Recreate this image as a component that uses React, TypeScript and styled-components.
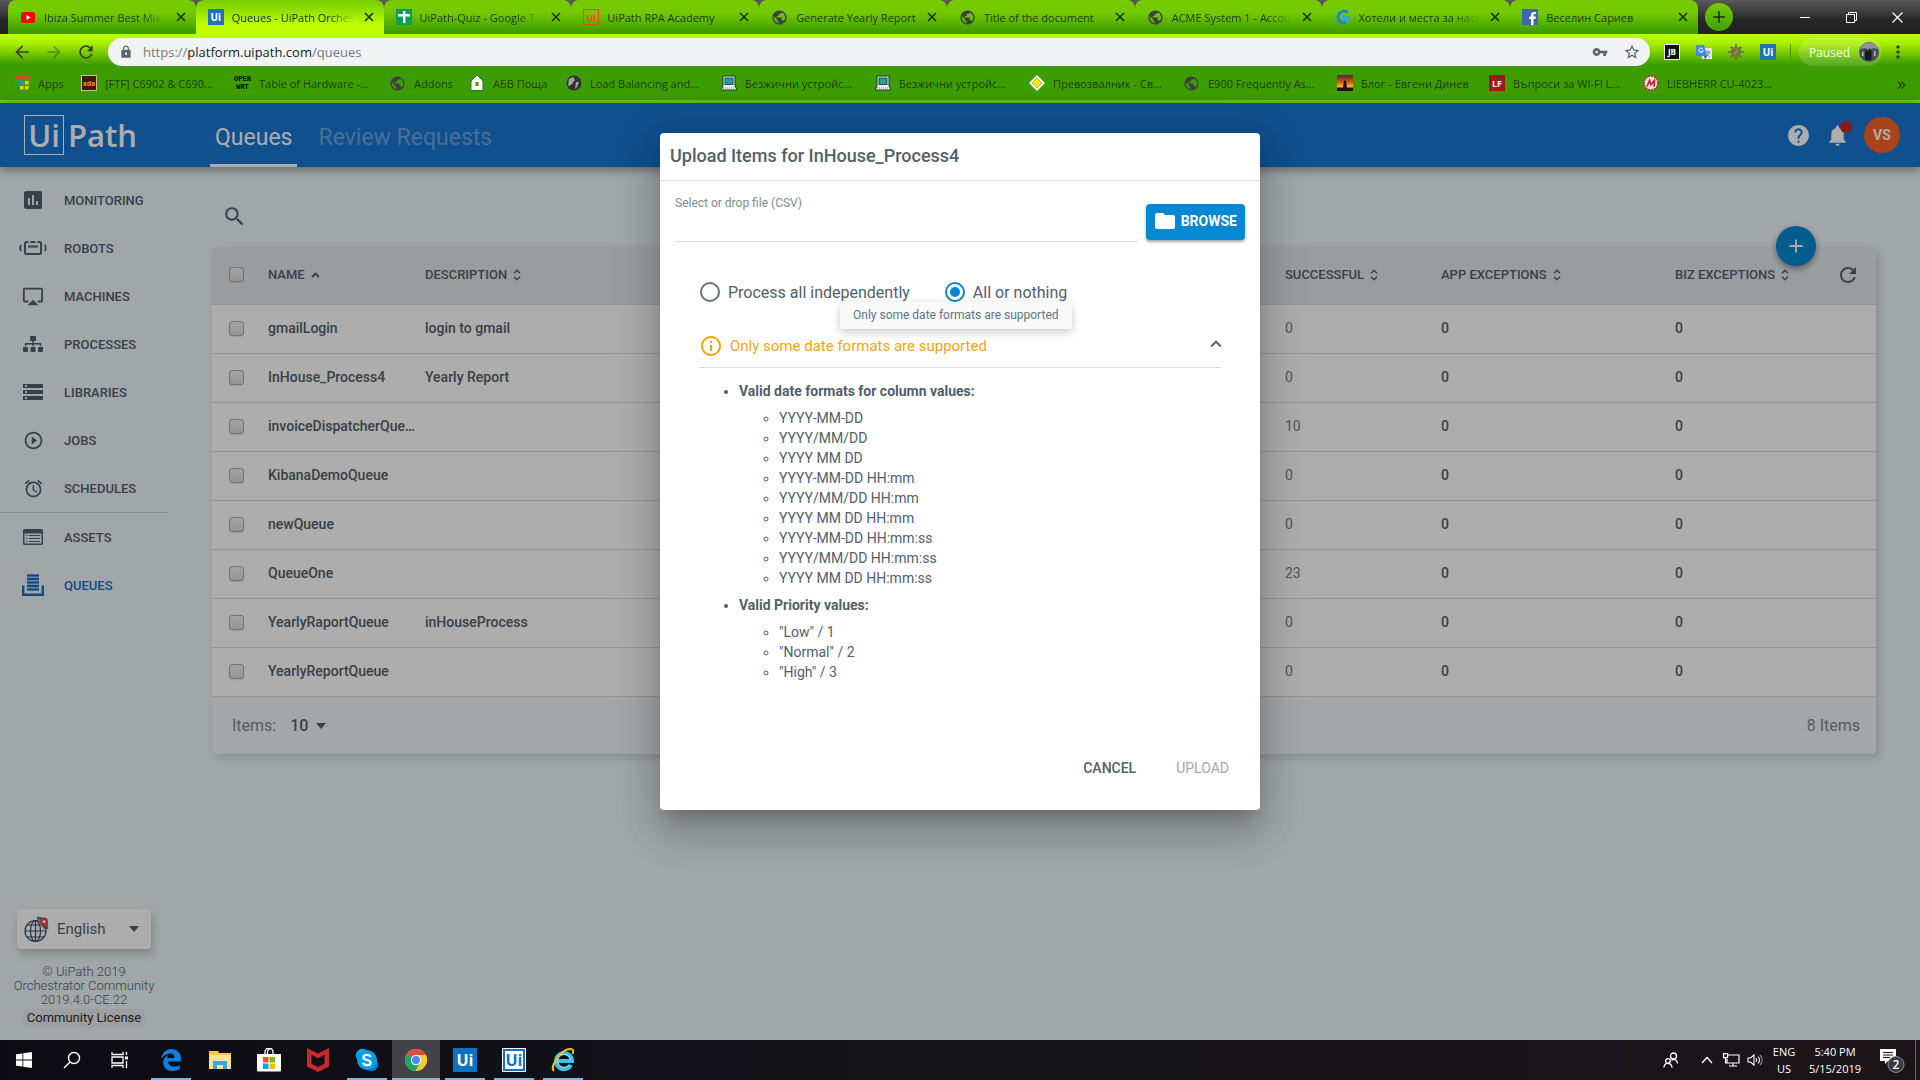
import React from "react";
import styled, { createGlobalStyle } from "styled-components";
import {
  MdAdd,
  MdAirplay,
  MdAlarm,
  MdAssessment,
  MdFolder,
  MdHelp,
  MdInfoOutline,
  MdKeyboardArrowUp,
  MdLock,
  MdMoreVert,
  MdNotifications,
  MdPlayCircleOutline,
  MdPublic,
  MdRefresh,
  MdSearch,
  MdStarBorder,
  MdStorage,
  MdVpnKey,
  MdArrowBack,
  MdArrowForward,
} from "react-icons/md";
import { FaSitemap } from "react-icons/fa";

const roboto = `Roboto, "Noto Sans", sans-serif`;
const system = `"Open Sans", "Noto Sans", sans-serif`;
const slate = "#526069";
const azure = "#0388d1";

const GlobalStyle = createGlobalStyle`
  *, *::before, *::after { box-sizing: border-box; }
  body { margin: 0; background: #eef5f9; font-family: ${roboto}; color: ${slate}; }
  button, input, select { font: inherit; color: inherit; margin: 0; }
  button { border: 0; padding: 0; background: none; cursor: pointer; }
  a { color: inherit; text-decoration: none; }
  ul { margin: 0; padding: 0; }
  svg { display: block; flex: none; }
`;

const Screen = styled.div`
  min-height: 100vh;
  display: flex;
  flex-direction: column;
`;

/* ---------- browser window ---------- */

const TabStrip = styled.div`
  height: 34px;
  display: flex;
  align-items: center;
  padding-left: 8px;
  background: linear-gradient(#5a5a5a, #262626 60%, #222);
  font-family: ${system};
  font-size: 11px;
`;

const Tabs = styled.div`
  display: flex;
  flex: 0 1 1690px;
  min-width: 0;
  height: 34px;
`;

const Tab = styled.div<{ $active?: boolean }>`
  flex: 1 1 0;
  min-width: 0;
  height: 34px;
  display: flex;
  align-items: center;
  gap: 8px;
  padding: 0 8px 0 12px;
  border-radius: 8px 8px 0 0;
  color: ${(p) => (p.$active ? "#1c2a00" : "#1f3d0c")};
  background: ${(p) =>
    p.$active
      ? "linear-gradient(#78cc00, #8fdf00 30%, #c0ff00 75%)"
      : "linear-gradient(#78cc00, #72c800 40%, #3d9c00 95%)"};
`;

const TabTitle = styled.span<{ $faded?: boolean }>`
  flex: 1;
  min-width: 0;
  overflow: hidden;
  white-space: nowrap;
  mask-image: ${(p) => (p.$faded ? "linear-gradient(90deg, #000 80%, transparent)" : "none")};
`;

const TabClose = styled.button`
  width: 14px;
  height: 14px;
  display: grid;
  place-items: center;
`;

const NewTab = styled.button`
  width: 28px;
  height: 28px;
  margin-left: 7px;
  border-radius: 50%;
  background: linear-gradient(#78cc00, #3f9e00);
  display: grid;
  place-items: center;
`;

const WindowButtons = styled.div`
  margin-left: auto;
  display: flex;
  height: 28px;
`;

const WindowButton = styled.button`
  width: 46px;
  display: grid;
  place-items: center;
`;

const Toolbar = styled.div`
  height: 32px;
  display: flex;
  align-items: center;
  padding: 4px 12px 0 12px;
  background: linear-gradient(#c0ff00, #a8ee00 30%, #3d9d00 95%);
  font-family: ${system};
`;

const ToolButton = styled.button<{ $faded?: boolean }>`
  width: 20px;
  height: 20px;
  margin-right: 12px;
  display: grid;
  place-items: center;
  color: #35442a;
  opacity: ${(p) => (p.$faded ? 0.45 : 1)};
`;

const AddressBar = styled.div`
  flex: 1;
  min-width: 0;
  height: 28px;
  display: flex;
  align-items: center;
  padding: 0 9px 0 11px;
  border-radius: 14px;
  background: #f1f3f4;
  color: #5f6368;
  gap: 10px;
`;

const Url = styled.span`
  flex: 1;
  font-size: 13px;
  color: #777b80;
  b {
    font-weight: 400;
    color: #202124;
  }
`;

const PageActions = styled.span`
  display: flex;
  align-items: center;
  gap: 15px;
`;

const Extensions = styled.div`
  display: flex;
  align-items: center;
  gap: 16px;
  margin-left: 14px;
`;

const Paused = styled.button`
  height: 28px;
  display: flex;
  align-items: center;
  gap: 9px;
  margin: 0 6px 0 8px;
  padding: 0 3px 0 10px;
  border-radius: 14px;
  background: rgba(255, 255, 255, 0.15);
  color: #f4ffe6;
  font-size: 12px;
`;

const Separator = styled.span`
  width: 1px;
  height: 16px;
  background: #4e9c10;
  margin-left: 14px;
`;

const Bookmarks = styled.nav`
  height: 37px;
  display: flex;
  align-items: center;
  padding: 0 14px 0 14px;
  border-bottom: 3px solid #78cc00;
  background: #3d9d00;
  font-family: ${system};
  font-size: 11px;
  color: #1f3d0c;
`;

const Bookmark = styled.a<{ $width: number }>`
  width: ${(p) => p.$width}px;
  display: flex;
  align-items: center;
  gap: 8px;
  white-space: nowrap;
`;

const More = styled.button`
  margin-left: auto;
  font-size: 18px;
  line-height: 18px;
`;

const Badge = styled.span<{ $bg: string; $fg: string; $line?: string; $size?: number }>`
  flex: none;
  width: 16px;
  height: 16px;
  display: grid;
  place-items: center;
  background: ${(p) => p.$bg};
  color: ${(p) => p.$fg};
  border: 1px solid ${(p) => p.$line || p.$bg};
  font: 700 ${(p) => p.$size || 10}px/1 ${system};
`;

/* ---------- application ---------- */

const Application = styled.div`
  flex: 1;
  position: relative;
  display: flex;
  flex-direction: column;
`;

const AppHeader = styled.header`
  position: relative;
  height: 64px;
  display: flex;
  align-items: center;
  padding: 0 20px 0 24px;
  background: #1976d2;
  color: #fff;
  box-shadow: 0 2px 10px rgba(0, 0, 0, 0.45);
`;

const Logo = styled.a`
  width: 186px;
  display: flex;
  align-items: center;
  gap: 4px;
  font: 600 31px/40px ${system};
`;

const LogoBox = styled.span`
  width: 40px;
  height: 40px;
  border: 1px solid #fff;
  line-height: 38px;
  text-align: center;
`;

const AppTabs = styled.nav`
  display: flex;
  gap: 16px;
  align-self: stretch;
`;

const AppTab = styled.a<{ $active?: boolean }>`
  padding: 9px 5px 0;
  font-size: 23px;
  font-weight: 400;
  line-height: 52px;
  color: ${(p) => (p.$active ? "#fff" : "rgba(255,255,255,.35)")};
  border-bottom: 3px solid ${(p) => (p.$active ? "#fff" : "transparent")};
`;

const HeaderActions = styled.div`
  margin-left: auto;
  display: flex;
  align-items: center;
  gap: 14px;
`;

const Bell = styled.button`
  position: relative;
  &::after {
    content: "";
    position: absolute;
    top: -2px;
    right: -2px;
    width: 12px;
    height: 12px;
    border-radius: 50%;
    background: #c62828;
  }
`;

const Avatar = styled.button`
  width: 36px;
  height: 36px;
  border-radius: 50%;
  background: #fb6325;
  color: #fff;
  font-size: 14px;
  font-weight: 700;
`;

const Body = styled.div`
  flex: 1;
  display: grid;
  grid-template-columns: 168px minmax(0, 1fr);
`;

const Sidebar = styled.aside`
  display: flex;
  flex-direction: column;
  padding: 9px 0 13px;
`;

const NavItem = styled.a<{ $active?: boolean }>`
  height: 48px;
  display: flex;
  align-items: center;
  gap: 17px;
  padding-left: 19px;
  font-size: 13px;
  font-weight: 500;
  color: ${(p) => (p.$active ? "#1b6ec9" : slate)};
`;

const IconSlot = styled.span`
  width: 28px;
  display: grid;
  place-items: center;
`;

const Divider = styled.hr`
  width: 100%;
  height: 1px;
  margin: 0;
  border: 0;
  background: #c9ced1;
`;

const Language = styled.label`
  width: 134px;
  height: 40px;
  margin: auto 17px 16px;
  display: flex;
  align-items: center;
  gap: 7px;
  padding: 0 12px 0 7px;
  border-radius: 4px;
  background: #fff;
  box-shadow: 2px 5px 10px rgba(0, 0, 0, 0.2);
  font-size: 15px;
`;

const PlainSelect = styled.select`
  appearance: none;
  flex: 1;
  min-width: 0;
  padding: 0;
  border: 0;
  background: none;
`;

const Caret = styled.span`
  border: 5px solid transparent;
  border-top: 6px solid #526069;
  border-bottom: 0;
`;

const Legal = styled.footer`
  text-align: center;
  font-size: 13px;
  font-weight: 300;
  line-height: 14px;
`;

const License = styled.button`
  height: 18px;
  margin-top: 2px;
  padding: 0 4px;
  border-radius: 4px;
  background: #e8eaed;
  color: #2b2f33;
  font-weight: 400;
  line-height: 18px;
`;

const Content = styled.main`
  padding: 37px 44px 0;
`;

const SearchButton = styled.button`
  display: block;
  margin: 0 0 18px 10px;
`;

const Panel = styled.section`
  position: relative;
  border-radius: 4px;
  background: #f1f7fb;
  box-shadow: 3px 4px 10px rgba(0, 0, 0, 0.15);
`;

const AddButton = styled.button`
  position: absolute;
  z-index: 1;
  top: -21px;
  right: 60px;
  width: 40px;
  height: 40px;
  border-radius: 50%;
  background: ${azure};
  color: #fff;
  display: grid;
  place-items: center;
  box-shadow: 0 3px 6px rgba(0, 0, 0, 0.4);
`;

const Table = styled.table`
  width: 100%;
  table-layout: fixed;
  border-collapse: separate;
  border-spacing: 0;
  th,
  td {
    padding: 0 0 2px;
    text-align: left;
    border-bottom: 1px solid #dcdcdc;
  }
  th {
    height: 58px;
    background: #e2e8ec;
    font-size: 13px;
    font-weight: 500;
  }
  td {
    height: 49px;
    background: #fff;
    font-size: 14px;
    font-weight: 500;
    overflow: hidden;
    white-space: nowrap;
    text-overflow: ellipsis;
  }
  th:first-child {
    border-top-left-radius: 4px;
  }
  th:last-child {
    border-top-right-radius: 4px;
  }
`;

const Col = styled.col<{ $width?: number }>`
  width: ${(p) => (p.$width ? p.$width + "px" : "auto")};
`;

const Clip = styled.span`
  display: block;
  max-width: 150px;
  overflow: hidden;
  text-overflow: ellipsis;
`;

const Muted = styled.span`
  font-weight: 400;
  color: #6f7e87;
`;

const SortButton = styled.button`
  display: flex;
  align-items: center;
  gap: 6px;
  font-weight: 500;
`;

const RefreshButton = styled.button`
  display: block;
  margin-left: 17px;
`;

const Check = styled.input`
  appearance: none;
  display: block;
  width: 15px;
  height: 15px;
  margin-left: 17px;
  border: 1px solid #aaa;
  border-radius: 3px;
  background: linear-gradient(#f0f0f0, #dcdcdc);
  box-shadow: 0 1px 1px rgba(0, 0, 0, 0.1);
`;

const Pager = styled.div`
  height: 57px;
  display: flex;
  align-items: center;
  padding: 0 16px 0 20px;
  font-size: 16px;
  color: #7d8b93;
`;

const PageSize = styled.label`
  display: flex;
  align-items: center;
  gap: 6px;
  select {
    width: 20px;
    margin-left: 8px;
    font-weight: 500;
    color: ${slate};
  }
`;

const Total = styled.span`
  margin-left: auto;
`;

/* ---------- dialog ---------- */

const Backdrop = styled.div`
  position: absolute;
  z-index: 2;
  inset: 0;
  display: flex;
  justify-content: center;
  align-items: flex-start;
  padding-top: 30px;
  background: rgba(0, 0, 0, 0.32);
`;

const Dialog = styled.div`
  width: 600px;
  border-radius: 4px;
  background: #fff;
  box-shadow: 0 11px 15px -7px rgba(0, 0, 0, 0.2), 0 24px 38px 3px rgba(0, 0, 0, 0.14),
    0 9px 46px 8px rgba(0, 0, 0, 0.12);
`;

const DialogTitle = styled.h2`
  height: 48px;
  margin: 0;
  padding: 0 10px;
  border-bottom: 1px solid #dcdfe1;
  font-size: 18px;
  font-weight: 500;
  line-height: 46px;
`;

const FileRow = styled.div`
  display: flex;
  gap: 8px;
  padding: 15px 15px 0;
`;

const FileField = styled.label`
  flex: 1;
  font-size: 12px;
  line-height: 14px;
  color: #7b8c95;
  input {
    display: block;
    width: 100%;
    height: 32px;
    border: 0;
    border-bottom: 1px solid #dcdfe1;
    background: none;
    outline: 0;
  }
`;

const Browse = styled.button`
  height: 36px;
  margin-top: 8px;
  padding: 0 8px 2px 7px;
  display: flex;
  align-items: center;
  gap: 4px;
  border-radius: 4px;
  background: ${azure};
  color: #fff;
  font-size: 14px;
  font-weight: 700;
  box-shadow: 0 2px 3px rgba(0, 0, 0, 0.35);
`;

const Options = styled.fieldset`
  position: relative;
  display: flex;
  gap: 35px;
  margin: 40px 0 0;
  padding: 0 40px;
  border: 0;
`;

const Option = styled.label`
  display: flex;
  align-items: center;
  gap: 8px;
  height: 20px;
  font-size: 16px;
  input {
    appearance: none;
    width: 20px;
    height: 20px;
    border: 2px solid #607580;
    border-radius: 50%;
    background: #fff;
  }
  input:checked {
    border-color: ${azure};
    background: ${azure};
    background-clip: content-box;
    padding: 3px;
  }
`;

const Tooltip = styled.div`
  position: absolute;
  z-index: 1;
  top: 20px;
  left: 180px;
  padding: 0 13px;
  border-radius: 3px;
  background: #fafafa;
  font-size: 12px;
  line-height: 27px;
  color: #607580;
  white-space: nowrap;
  box-shadow: 0 3px 10px rgba(0, 0, 0, 0.22);
`;

const Notice = styled.button`
  width: 522px;
  height: 44px;
  margin: 22px 39px 0;
  display: flex;
  align-items: center;
  gap: 7px;
  border-bottom: 1px solid #dcdfe1;
  color: #f7a411;
  font-size: 15px;
`;

const Fold = styled.span`
  margin: 0 -6px 4px auto;
  color: ${slate};
`;

const Groups = styled.ul`
  padding: 13px 0 0 79px;
  font-size: 14px;
  line-height: 20px;
  > li {
    margin-bottom: 7px;
  }
`;

const Values = styled.ul`
  margin-top: 7px;
  padding-left: 40px;
  list-style: circle;
`;

const Actions = styled.div`
  display: flex;
  justify-content: flex-end;
  gap: 40px;
  padding: 61px 31px 24px;
`;

const Action = styled.button`
  height: 36px;
  font-size: 14px;
  font-weight: 500;
  color: ${slate};
  &:disabled {
    font-weight: 400;
    color: #a6a6a6;
  }
`;

/* ---------- taskbar ---------- */

const Taskbar = styled.div`
  height: 40px;
  display: flex;
  background: linear-gradient(90deg, #0b0b11, #15151a 50%, #1b1519);
  color: #fff;
  font-family: ${system};
  font-size: 11px;
`;

const TaskGroup = styled.div<{ $gap?: number }>`
  display: flex;
  gap: ${(p) => p.$gap || 0}px;
  margin-right: 3px;
`;

const Task = styled.button<{ $running?: boolean; $active?: boolean }>`
  width: 48px;
  height: 40px;
  display: grid;
  place-items: center;
  padding-top: 2px;
  border-bottom: 2px solid transparent;
  background: ${(p) =>
    p.$active
      ? "linear-gradient(#76b9ed, #76b9ed) 50% 100% / 48px 2px no-repeat border-box, #434347"
      : p.$running
        ? "linear-gradient(#76b9ed, #76b9ed) 50% 100% / 40px 2px no-repeat border-box"
        : "none"};
`;

const Tray = styled.div`
  margin-left: auto;
  display: flex;
  align-items: center;
`;

const TrayButton = styled.button<{ $width: number }>`
  width: ${(p) => p.$width}px;
  height: 40px;
  display: grid;
  place-content: center;
  justify-items: center;
  line-height: 17px;
`;

const ShowDesktop = styled.button`
  width: 5px;
  height: 40px;
  border-left: 1px solid #6a6a6e;
`;

const UiTile = styled.span<{ $inverse?: boolean }>`
  width: 24px;
  height: 24px;
  display: grid;
  place-items: center;
  border: 1px solid ${(p) => (p.$inverse ? "#fff" : "#0b72c4")};
  box-shadow: inset 0 0 0 2px #0b72c4;
  background: ${(p) => (p.$inverse ? "#fff" : "#0b72c4")};
  color: ${(p) => (p.$inverse ? "#0b72c4" : "#fff")};
  font: 700 16px/20px ${system};
`;

/* ---------- drawings ---------- */

const GlobeMark = () => <MdPublic size={17} color="#3c4043" />;

const CloseMark = () => (
  <svg width="10" height="10" viewBox="0 0 10 10" stroke="#1f3300" strokeWidth="1.7">
    <path d="M1 1l8 8M9 1L1 9" />
  </svg>
);

const YoutubeMark = () => (
  <svg width="16" height="16" viewBox="0 0 16 16">
    <rect x="1" y="3" width="14" height="11" rx="2.5" fill="#f00" />
    <path d="M6.5 6v5L10.5 8.5z" fill="#fff" />
  </svg>
);

const SheetMark = () => (
  <svg width="16" height="16" viewBox="0 0 16 16">
    <rect width="16" height="16" rx="1" fill="#0f9d58" />
    <path d="M7 2h2.4v3H14v2.4H9.4V14H7V7.400H2V5h5z" fill="#fff" />
  </svg>
);

const GMark = () => (
  <svg width="16" height="16" viewBox="0 0 16 16" fill="none" strokeWidth="3">
    <path d="M13.500 3.500A6 6 0 1 0 8 14c3 0 5-1 5.500-5H8" stroke="#1e88d6" />
    <path d="M13 13.500V9H8" stroke="#29b6d8" />
  </svg>
);

const FacebookMark = () => (
  <svg width="16" height="16" viewBox="0 0 16 16">
    <rect width="16" height="16" fill="#4267b2" />
    <path d="M14 5V3h-2C9.800 3 9 4.200 9 6v1.500H7.200V10H9v6h2.500v-6h2l.4-2.500h-2.400V6.200c0-.8.300-1.200 1-1.200z" fill="#fff" />
  </svg>
);

const AppsMark = () => {
  const colors = ["#f33", "#f33", "#f33", "#2a9d4b", "#2b8df0", "#fc0", "#2a9d4b", "#fc0", "#fc0"];
  return (
    <svg width="16" height="16" viewBox="0 0 16 16">
      {colors.map((c, i) => (
        <rect key={i} x={1 + (i % 3) * 5} y={1 + Math.floor(i / 3) * 5} width="3.500" height="3.500" fill={c} />
      ))}
    </svg>
  );
};

const OpenWrt = styled.span`
  flex: none;
  width: 17px;
  display: grid;
  justify-items: center;
  font: 700 7px/8px "Liberation Mono", monospace;
  color: #000;
`;

const HouseMark = () => (
  <svg width="16" height="16" viewBox="0 0 16 16">
    <path d="M8 0l6 6v9.500H2V6z" fill="#fff" stroke="#1c7c1c" />
    <rect x="6.500" y="7" width="3" height="4" fill="#3d9d00" />
  </svg>
);

const BallMark = () => (
  <svg width="16" height="16" viewBox="0 0 16 16">
    <circle cx="8" cy="8" r="7.500" fill="#333" />
    <path d="M3 4l4-2 2 3-4 5-3 1zM10 7l3 0-2 5-2 2z" fill="#a5a5a5" />
  </svg>
);

const ComputerMark = () => (
  <svg width="16" height="16" viewBox="0 0 16 16">
    <path d="M2 1h12v10l2 4H0l2-4z" fill="#eee" stroke="#1b3b2b" />
    <rect x="4" y="3" width="8" height="6.500" fill="#2a9d9b" stroke="#14555a" />
    <path d="M2 13h12" stroke="#777" strokeDasharray="1 1" />
  </svg>
);

const DiamondMark = () => (
  <svg width="16" height="16" viewBox="0 0 16 16">
    <path d="M8 0l8 8-8 8-8-8z" fill="#fff" />
    <path d="M8 3l5 5-5 5-5-5z" fill="#fbe900" stroke="#777" strokeWidth=".6" />
  </svg>
);

const SunsetMark = () => (
  <svg width="16" height="16" viewBox="0 0 16 16">
    <defs>
      <linearGradient id="dusk" x2="0" y2="1">
        <stop offset="0" stopColor="#4a2a30" />
        <stop offset=".45" stopColor="#d9571a" />
        <stop offset=".7" stopColor="#fbb21f" />
      </linearGradient>
    </defs>
    <rect width="16" height="16" fill="url(#dusk)" />
    <path d="M0 12.500h6l1-7h2l1 7h6V16H0z" fill="#22100c" />
  </svg>
);

const MMark = () => (
  <svg width="16" height="16" viewBox="0 0 16 16">
    <circle cx="8" cy="8" r="7" fill="#f5dcdc" stroke="#c8202b" strokeWidth="1.500" strokeDasharray="2 1" />
    <path d="M4 11.500L6.500 5.500l1.500 4 3.500-4-.5 6" fill="none" stroke="#c8202b" strokeWidth="1.700" />
  </svg>
);

const TranslateMark = () => (
  <svg width="16" height="16" viewBox="0 0 16 16">
    <rect x="6" y="4" width="10" height="11" fill="#e6e6e6" />
    <path d="M9 8h5M11.500 7v1M13.500 8c-.5 2-2 3.500-4 4.500M10 8.500c.5 1.500 2 3 3.500 4" stroke="#777" fill="none" />
    <path d="M0 1h8l3 11H1a1 1 0 0 1-1-1z" fill="#4285f4" />
    <path d="M7 5.200A2.200 2.200 0 1 0 7.200 7H5.200" stroke="#fff" fill="none" />
    <path d="M8 12h3l-2 3.500z" fill="#3060c0" />
  </svg>
);

const BugMark = () => (
  <svg width="16" height="16" viewBox="0 0 16 16" stroke="#73783f" strokeWidth="1.800">
    <circle cx="8" cy="8" r="4.500" fill="#73783f" />
    <path d="M8 0v3M8 13v3M0 8h3M13 8h3M2.500 2.500l2 2M11.500 11.500l2 2M13.500 2.500l-2 2M2.500 13.500l2-2" />
    <path d="M9.500 5.500l-3 5" stroke="#9cb52c" strokeWidth="1" />
  </svg>
);

const PhotoMark = () => (
  <svg width="20" height="20" viewBox="0 0 20 20">
    <circle cx="10" cy="10" r="10" fill="#4b4f55" />
    <path d="M1 7a9.500 9.500 0 0 1 18 0l-5-1-4 2-4-2z" fill="#8d959b" />
    <path d="M6 18V9l1.500-2L9 10l1.500-4 2 3v9z" fill="#16181b" />
    <path d="M15 9h1.500v5H15zM3 10h1.500v4H3z" fill="#b8bcc0" />
  </svg>
);

const RobotIcon = () => (
  <svg width="28" height="20" viewBox="0 0 28 20" fill="none" stroke="currentColor" strokeWidth="2">
    <path d="M9.500 4h-2A1.500 1.500 0 0 0 6 5.500v9A1.500 1.500 0 0 0 7.500 16h13a1.500 1.500 0 0 0 1.500-1.500v-9A1.500 1.500 0 0 0 20.500 4h-2M11.500 4h5M9 8.500h10" />
    <path d="M2.500 7C.8 8 .8 12 2.500 13M25.500 7c1.700 1 1.700 5 0 6" strokeWidth="1.800" />
  </svg>
);

const AssetIcon = () => (
  <svg width="22" height="18" viewBox="0 0 22 18">
    <path
      fillRule="evenodd"
      fill="currentColor"
      d="M2.500 1h17A1.500 1.500 0 0 1 21 2.500v13a1.500 1.500 0 0 1-1.500 1.500h-17A1.500 1.500 0 0 1 1 15.500v-13A1.500 1.500 0 0 1 2.500 1zM2.500 5.500v10h17v-10z"
    />
    <path d="M4 7.500h1.500M7 7.500h11M4 10.500h1.500M7 10.500h11M4 13.500h1.500M7 13.500h11" stroke="currentColor" strokeWidth="1.200" />
  </svg>
);

const QueueIcon = () => (
  <svg width="22" height="22" viewBox="0 0 22 22" fill="none" stroke="currentColor">
    <path d="M1.200 11.500v9.200h19.600v-9.200" strokeWidth="2.400" />
    <path d="M5 1.500h12M5 5h12M5 8.500h12M5 12h12M5 15.500h12" strokeWidth="2.200" />
    <path d="M5 0h12v17H5z" fill="currentColor" fillOpacity=".35" stroke="none" />
  </svg>
);

const SortIcon = () => (
  <svg width="8" height="12" viewBox="0 0 8 12" fill="none" stroke="currentColor" strokeWidth="1.500">
    <path d="M1 4.200L4 1.200l3 3M1 7.800l3 3 3-3" />
  </svg>
);

const AscendingIcon = () => (
  <svg width="9" height="6" viewBox="0 0 9 6" fill="none" stroke="currentColor" strokeWidth="1.900">
    <path d="M1 5l3.500-3.500L8 5" />
  </svg>
);

const WorldIcon = () => (
  <svg width="26" height="28" viewBox="0 0 26 28" fill="none" stroke="#344a63" strokeWidth="1.200">
    <path d="M13 3c7 0 10 5 10 11" stroke="#2c92c4" strokeWidth="3" />
    <circle cx="11.500" cy="16" r="10.500" fill="#fff" />
    <ellipse cx="11.500" cy="16" rx="5" ry="10.500" />
    <path d="M11.500 5.500v21M1 16h21M3 10h17M3 22h17" />
    <path d="M20 14c-3-4-4-5-4-7.500a4 4 0 0 1 8 0C24 9 23 10 20 14z" fill="#e2483d" stroke="none" />
    <circle cx="20" cy="6.500" r="1.600" fill="#fff" stroke="none" />
  </svg>
);

const WindowsMark = () => (
  <svg width="16" height="16" viewBox="0 0 16 16" fill="#fff">
    <path d="M0 2.300l6.500-.9v6.200H0zM7.300 1.300L16 0v7.600H7.300zM0 8.400h6.500v6.200L0 13.700zM7.300 8.400H16V16l-8.700-1.300z" />
  </svg>
);

const LensMark = () => (
  <svg width="18" height="18" viewBox="0 0 18 18" fill="none" stroke="#fff" strokeWidth="1.400">
    <circle cx="11" cy="7" r="5.500" />
    <path d="M7 11l-6 6" />
  </svg>
);

const TaskViewMark = () => (
  <svg width="18" height="16" viewBox="0 0 18 16" fill="none" stroke="#fff" strokeWidth="1.300">
    <path d="M1 0v2.500h11V0M1 16v-2.500h11V16M1 5h11v6H1zM15.500 0v3M15.500 9v7" />
    <rect x="14" y="4.500" width="3" height="3" fill="#fff" stroke="none" />
  </svg>
);

const EdgeMark = () => (
  <svg width="22" height="22" viewBox="0 0 22 22">
    <path
      fill="#0f7ddb"
      d="M1 10C2 4 6 0 11.500 0 17 0 21 4 21 9.500V12.500H8c.2 3.500 3 5 6 5 2.200 0 4-.6 5.800-1.600v4.400C18 21.400 15.500 22 13 22 7 22 3.200 18.500 3.200 13.500c0-3.500 1.800-6 5-7.500-.8 1-1.100 2-1.200 3h7.500c0-3-1.600-4.600-4.500-4.600C6.500 4.400 3.500 6.500 1 10z"
    />
  </svg>
);

const ExplorerMark = () => (
  <svg width="22" height="18" viewBox="0 0 22 18">
    <path d="M0 0h9l1 2h12v16H0z" fill="#f6c845" />
    <path d="M0 4h22v14H0z" fill="#fde38f" />
    <path d="M4 18v-8h14v8h-4v-4H8v4z" fill="#35a8e0" />
  </svg>
);

const StoreMark = () => (
  <svg width="24" height="24" viewBox="0 0 24 24">
    <path d="M8 7V4a4 4 0 0 1 8 0v3M10.500 7V4a4 4 0 0 1 4-3.500" fill="none" stroke="#fff" strokeWidth="1.300" />
    <path d="M0 6h24v16.500a1 1 0 0 1-1 1H1a1 1 0 0 1-1-1z" fill="#fff" />
    <path d="M6 9h5.500v5.500H6z" fill="#f25022" />
    <path d="M12.500 9H18v5.500h-5.500z" fill="#7fba00" />
    <path d="M6 15.500h5.500V21H6z" fill="#00a4ef" />
    <path d="M12.500 15.500H18V21h-5.500z" fill="#ffb900" />
  </svg>
);

const ShieldMark = () => (
  <svg width="22" height="24" viewBox="0 0 22 24">
    <path d="M0 0l11 5.500L22 0v18.500L11 24 0 18.500zM4.500 6.800v9L11 19l6.500-3.200v-9L11 10.200z" fill="#c62a2e" fillRule="evenodd" />
  </svg>
);

const SkypeMark = () => (
  <svg width="24" height="24" viewBox="0 0 24 24">
    <circle cx="7.500" cy="7.500" r="6.700" fill="#0fa4ee" />
    <circle cx="16.500" cy="16.500" r="6.700" fill="#0078d4" />
    <circle cx="12" cy="12" r="10" fill="#089be8" />
    <path
      d="M15.800 8.800C15 7.200 13.500 6.800 12 6.800c-2 0-3.500 1-3.500 2.600 0 3.400 7.200 1.800 7.200 5.100 0 1.700-1.700 2.700-3.700 2.700-1.800 0-3.300-.6-4.100-2.400"
      fill="none"
      stroke="#fff"
      strokeWidth="2.300"
    />
  </svg>
);

const ChromeMark = () => (
  <svg width="22" height="22" viewBox="0 0 22 22">
    <circle cx="11" cy="11" r="11" fill="#fcc934" />
    <path d="M11 11L1.500 5.500a11 11 0 0 1 19 0z" fill="#dd4b3e" />
    <path d="M11 11L1.500 5.500A11 11 0 0 0 10.500 22l5-8.500z" fill="#1da462" />
    <path d="M11 6h10a11 11 0 0 1 .5 8L11 22l5-9z" fill="#fcc934" />
    <circle cx="11" cy="11" r="5.200" fill="#fff" />
    <circle cx="11" cy="11" r="4.200" fill="#4c8bf5" />
  </svg>
);

const ExplorerEMark = () => (
  <svg width="24" height="24" viewBox="0 0 24 24" fill="none">
    <path d="M20 17a8 8 0 1 1 1-4H7" stroke="#3cc0f2" strokeWidth="4" />
    <path d="M18 17a6.500 6.500 0 1 1 1.500-5" stroke="#a9e8fd" strokeWidth="1" />
    <path d="M3 23C-2 18 12 0 20 1c3 .5 2.500 3 1.500 5" stroke="#f4c217" strokeWidth="2" />
  </svg>
);

const PeopleMark = () => (
  <svg width="16" height="16" viewBox="0 0 16 16" fill="none" stroke="#fff" strokeWidth="1.300">
    <circle cx="10.500" cy="4" r="3" />
    <circle cx="5" cy="9" r="2.300" />
    <path d="M1 15.500c0-5.500 7.500-5.500 8 0M8.500 8.500c3-2.500 6 0 6 3" />
  </svg>
);

const ChevronMark = () => (
  <svg width="12" height="8" viewBox="0 0 12 8" fill="none" stroke="#fff" strokeWidth="1.300">
    <path d="M1 7l5-5.500L11 7" />
  </svg>
);

const NetworkMark = () => (
  <svg width="17" height="14" viewBox="0 0 17 14" fill="none" stroke="#fff" strokeWidth="1.200">
    <path d="M5 2h11v8H4V6M10 10v3M6 13h8M.6.600h4v4h-4zM2.500 5v5H4" />
  </svg>
);

const VolumeMark = () => (
  <svg width="17" height="14" viewBox="0 0 17 14" fill="none" stroke="#fff" strokeWidth="1.100">
    <path d="M1 5h2.500L7 2v10L3.500 9H1zM9 5c1 1.300 1 2.700 0 4M11 3.500c2 2.200 2 4.800 0 7" />
    <path d="M13 2c3 3 3 7 0 10" strokeOpacity=".5" />
  </svg>
);

const NoticeMark = () => (
  <svg width="26" height="26" viewBox="0 0 26 26">
    <path d="M1 2h16v12H9l-3 3v-3H1z" fill="#fff" />
    <path d="M4 5.500h10M4 8h10M4 10.500h7" stroke="#17161a" />
    <circle cx="17" cy="17.500" r="8" fill="#3a3a3d" stroke="#8b8b8e" />
    <text x="17" y="21.500" textAnchor="middle" fontFamily="Open Sans, sans-serif" fontSize="12" fontWeight="600" fill="#fff">
      2
    </text>
  </svg>
);

/* ---------- data ---------- */

const tabs = [
  { title: "Ibiza Summer Best Mix", icon: <YoutubeMark />, faded: true },
  { title: "Queues - UiPath Orches", icon: <Badge $bg="#2272b9" $fg="#fff">Ui</Badge>, active: true, faded: true },
  { title: "UiPath-Quiz - Google T", icon: <SheetMark />, faded: true },
  { title: "UiPath RPA Academy", icon: <Badge $bg="transparent" $fg="#fa4616" $line="#fa4616" $size={9}>Ui</Badge> },
  { title: "Generate Yearly Report", icon: <GlobeMark /> },
  { title: "Title of the document", icon: <GlobeMark /> },
  { title: "ACME System 1 - Accou", icon: <GlobeMark />, faded: true },
  { title: "Хотели и места за наст", icon: <GMark />, faded: true },
  { title: "Веселин Сариев", icon: <FacebookMark /> },
];

const bookmarks = [
  { title: "Apps", width: 67, icon: <AppsMark /> },
  { title: "[FTF] C6902 & C690...", width: 153, icon: <Badge $bg="#3a1a08" $fg="#ff8a1f" $line="#d8b9a0" $size={7}>xda</Badge> },
  {
    title: "Table of Hardware -...",
    width: 155,
    icon: (
      <OpenWrt>
        <span>OPEN</span>
        <span>WRT</span>
      </OpenWrt>
    ),
  },
  { title: "Addons", width: 80, icon: <GlobeMark /> },
  { title: "АБВ Поща", width: 97, icon: <HouseMark /> },
  { title: "Load Balancing and...", width: 155, icon: <BallMark /> },
  { title: "Безжични устройс...", width: 154, icon: <ComputerMark /> },
  { title: "Безжични устройс...", width: 154, icon: <ComputerMark /> },
  { title: "Превозвалник - Св...", width: 154, icon: <DiamondMark /> },
  { title: "E900 Frequently As...", width: 154, icon: <GlobeMark /> },
  { title: "Блог - Евгени Динев", width: 152, icon: <SunsetMark /> },
  { title: "Въпроси за WI-FI L...", width: 154, icon: <Badge $bg="#a3161a" $fg="#fff" $size={9}>LF</Badge> },
  { title: "LIEBHERR CU-4023...", width: 154, icon: <MMark /> },
];

const navigation = [
  { label: "MONITORING", icon: <MdAssessment size={24} /> },
  { label: "ROBOTS", icon: <RobotIcon /> },
  { label: "MACHINES", icon: <MdAirplay size={22} /> },
  { label: "PROCESSES", icon: <FaSitemap size={20} /> },
  { label: "LIBRARIES", icon: <MdStorage size={24} /> },
  { label: "JOBS", icon: <MdPlayCircleOutline size={21} /> },
  { label: "SCHEDULES", icon: <MdAlarm size={21} /> },
];

const queues = [
  { name: "gmailLogin", description: "login to gmail", successful: 0 },
  { name: "InHouse_Process4", description: "Yearly Report", successful: 0 },
  { name: "invoiceDispatcherQueue", description: "", successful: 10 },
  { name: "KibanaDemoQueue", description: "", successful: 0 },
  { name: "newQueue", description: "", successful: 0 },
  { name: "QueueOne", description: "", successful: 23 },
  { name: "YearlyRaportQueue", description: "inHouseProcess", successful: 0 },
  { name: "YearlyReportQueue", description: "", successful: 0 },
];

const dateFormats = [
  "YYYY-MM-DD",
  "YYYY/MM/DD",
  "YYYY MM DD",
  "YYYY-MM-DD HH:mm",
  "YYYY/MM/DD HH:mm",
  "YYYY MM DD HH:mm",
  "YYYY-MM-DD HH:mm:ss",
  "YYYY/MM/DD HH:mm:ss",
  "YYYY MM DD HH:mm:ss",
];

const priorities = ['"Low" / 1', '"Normal" / 2', '"High" / 3'];

/* ---------- sections ---------- */

const Browser = () => (
  <>
    <TabStrip>
      <Tabs>
        {tabs.map((tab) => (
          <Tab key={tab.title} $active={tab.active}>
            {tab.icon}
            <TabTitle $faded={tab.faded}>{tab.title}</TabTitle>
            <TabClose aria-label="Close tab">
              <CloseMark />
            </TabClose>
          </Tab>
        ))}
      </Tabs>
      <NewTab aria-label="New tab">
        <MdAdd size={20} color="#15330a" />
      </NewTab>
      <WindowButtons>
        <WindowButton aria-label="Minimize">
          <svg width="10" height="10" stroke="#fff">
            <path d="M0 5.500h10" />
          </svg>
        </WindowButton>
        <WindowButton aria-label="Restore">
          <svg width="11" height="11" fill="none" stroke="#fff">
            <path d="M.5 2.500h8v8h-8zM2.500 2.500v-2h8v8h-2" />
          </svg>
        </WindowButton>
        <WindowButton aria-label="Close">
          <svg width="11" height="11" stroke="#fff" strokeWidth="1.200">
            <path d="M.5.500l10 10M10.500.500l-10 10" />
          </svg>
        </WindowButton>
      </WindowButtons>
    </TabStrip>
    <Toolbar>
      <ToolButton aria-label="Back">
        <MdArrowBack size={20} />
      </ToolButton>
      <ToolButton aria-label="Forward" $faded>
        <MdArrowForward size={20} />
      </ToolButton>
      <ToolButton aria-label="Reload">
        <MdRefresh size={20} />
      </ToolButton>
      <AddressBar>
        <MdLock size={14} />
        <Url>
          https://<b>platform.uipath.com</b>/queues
        </Url>
        <PageActions>
          <MdVpnKey size={16} />
          <MdStarBorder size={18} />
        </PageActions>
      </AddressBar>
      <Extensions>
        <Badge $bg="#111" $fg="#fff" $line="#eee" $size={8}>JB</Badge>
        <TranslateMark />
        <BugMark />
        <Badge $bg="#2272b9" $fg="#fff">Ui</Badge>
      </Extensions>
      <Separator />
      <Paused>
        Paused
        <PhotoMark />
      </Paused>
      <MdMoreVert size={20} color="#2a4a14" />
    </Toolbar>
    <Bookmarks>
      {bookmarks.map((item, i) => (
        <Bookmark key={i} href="#" $width={item.width}>
          {item.icon}
          {item.title}
        </Bookmark>
      ))}
      <More aria-label="More bookmarks">»</More>
    </Bookmarks>
  </>
);

const Navigation = () => (
  <Sidebar>
    {navigation.map((item) => (
      <NavItem key={item.label} href="#">
        <IconSlot>{item.icon}</IconSlot>
        {item.label}
      </NavItem>
    ))}
    <Divider />
    <NavItem href="#">
      <IconSlot>
        <AssetIcon />
      </IconSlot>
      ASSETS
    </NavItem>
    <NavItem href="#" $active>
      <IconSlot>
        <QueueIcon />
      </IconSlot>
      QUEUES
    </NavItem>
    <Language>
      <WorldIcon />
      <PlainSelect aria-label="Language">
        <option>English</option>
      </PlainSelect>
      <Caret />
    </Language>
    <Legal>
      © UiPath 2019
      <br />
      Orchestrator Community
      <br />
      2019.4.0-CE.22
      <br />
      <License>Community License</License>
    </Legal>
  </Sidebar>
);

const QueueTable = () => (
  <Panel>
    <AddButton aria-label="Add queue">
      <MdAdd size={22} />
    </AddButton>
    <Table>
      <colgroup>
        <Col $width={56} />
        <Col $width={157} />
        <Col />
        <Col $width={156} />
        <Col $width={234} />
        <Col $width={144} />
        <Col $width={57} />
      </colgroup>
      <thead>
        <tr>
          <th>
            <Check type="checkbox" aria-label="Select all" />
          </th>
          <th>
            <SortButton>
              NAME <AscendingIcon />
            </SortButton>
          </th>
          {["DESCRIPTION", "SUCCESSFUL", "APP EXCEPTIONS", "BIZ EXCEPTIONS"].map((label) => (
            <th key={label}>
              <SortButton>
                {label} <SortIcon />
              </SortButton>
            </th>
          ))}
          <th>
            <RefreshButton aria-label="Refresh">
              <MdRefresh size={24} />
            </RefreshButton>
          </th>
        </tr>
      </thead>
      <tbody>
        {queues.map((queue) => (
          <tr key={queue.name}>
            <td>
              <Check type="checkbox" aria-label={queue.name} />
            </td>
            <td>
              <Clip>{queue.name}</Clip>
            </td>
            <td>{queue.description}</td>
            <td>
              <Muted>{queue.successful}</Muted>
            </td>
            <td>0</td>
            <td>0</td>
            <td />
          </tr>
        ))}
      </tbody>
    </Table>
    <Pager>
      <PageSize>
        Items:
        <PlainSelect>
          <option>10</option>
        </PlainSelect>
        <Caret />
      </PageSize>
      <Total>8 Items</Total>
    </Pager>
  </Panel>
);

const UploadDialog = () => (
  <Backdrop>
    <Dialog role="dialog" aria-labelledby="upload-title">
      <DialogTitle id="upload-title">Upload Items for InHouse_Process4</DialogTitle>
      <FileRow>
        <FileField>
          Select or drop file (CSV)
          <input type="text" />
        </FileField>
        <Browse>
          <MdFolder size={24} />
          BROWSE
        </Browse>
      </FileRow>
      <Options>
        <Option>
          <input type="radio" name="mode" />
          Process all independently
        </Option>
        <Option>
          <input type="radio" name="mode" defaultChecked />
          All or nothing
        </Option>
        <Tooltip role="tooltip">Only some date formats are supported</Tooltip>
      </Options>
      <Notice>
        <MdInfoOutline size={24} />
        Only some date formats are supported
        <Fold>
          <MdKeyboardArrowUp size={22} />
        </Fold>
      </Notice>
      <Groups>
        <li>
          <b>Valid date formats for column values:</b>
          <Values>
            {dateFormats.map((format) => (
              <li key={format}>{format}</li>
            ))}
          </Values>
        </li>
        <li>
          <b>Valid Priority values:</b>
          <Values>
            {priorities.map((priority) => (
              <li key={priority}>{priority}</li>
            ))}
          </Values>
        </li>
      </Groups>
      <Actions>
        <Action>CANCEL</Action>
        <Action disabled>UPLOAD</Action>
      </Actions>
    </Dialog>
  </Backdrop>
);

const DesktopTaskbar = () => (
  <Taskbar>
    <TaskGroup>
      <Task aria-label="Start"><WindowsMark /></Task>
      <Task aria-label="Search"><LensMark /></Task>
      <Task aria-label="Task view"><TaskViewMark /></Task>
    </TaskGroup>
    <TaskGroup $gap={1}>
      <Task aria-label="Edge" $running><EdgeMark /></Task>
      <Task aria-label="File Explorer"><ExplorerMark /></Task>
      <Task aria-label="Store"><StoreMark /></Task>
      <Task aria-label="McAfee"><ShieldMark /></Task>
      <Task aria-label="Skype" $running><SkypeMark /></Task>
      <Task aria-label="Chrome" $running $active><ChromeMark /></Task>
      <Task aria-label="UiPath Studio" $running><UiTile>Ui</UiTile></Task>
      <Task aria-label="UiPath Robot" $running><UiTile $inverse>Ui</UiTile></Task>
      <Task aria-label="Internet Explorer" $running><ExplorerEMark /></Task>
    </TaskGroup>
    <Tray>
      <TrayButton $width={48} aria-label="People"><PeopleMark /></TrayButton>
      <TrayButton $width={24} aria-label="Hidden icons"><ChevronMark /></TrayButton>
      <TrayButton $width={24} aria-label="Network"><NetworkMark /></TrayButton>
      <TrayButton $width={24} aria-label="Volume"><VolumeMark /></TrayButton>
      <TrayButton $width={34}>
        <span>ENG</span>
        <span>US</span>
      </TrayButton>
      <TrayButton $width={68}>
        <span>5:40 PM</span>
        <span>5/15/2019</span>
      </TrayButton>
      <TrayButton $width={46} aria-label="Notifications"><NoticeMark /></TrayButton>
      <ShowDesktop aria-label="Show desktop" />
    </Tray>
  </Taskbar>
);

export default function App() {
  return (
    <Screen>
      <GlobalStyle />
      <Browser />
      <Application>
        <AppHeader>
          <Logo href="#">
            <LogoBox>Ui</LogoBox>
            Path
          </Logo>
          <AppTabs>
            <AppTab href="#" $active>Queues</AppTab>
            <AppTab href="#">Review Requests</AppTab>
          </AppTabs>
          <HeaderActions>
            <MdHelp size={25} />
            <Bell aria-label="Alerts">
              <MdNotifications size={25} />
            </Bell>
            <Avatar>VS</Avatar>
          </HeaderActions>
        </AppHeader>
        <Body>
          <Navigation />
          <Content>
            <SearchButton aria-label="Search">
              <MdSearch size={25} />
            </SearchButton>
            <QueueTable />
          </Content>
        </Body>
        <UploadDialog />
      </Application>
      <DesktopTaskbar />
    </Screen>
  );
}
